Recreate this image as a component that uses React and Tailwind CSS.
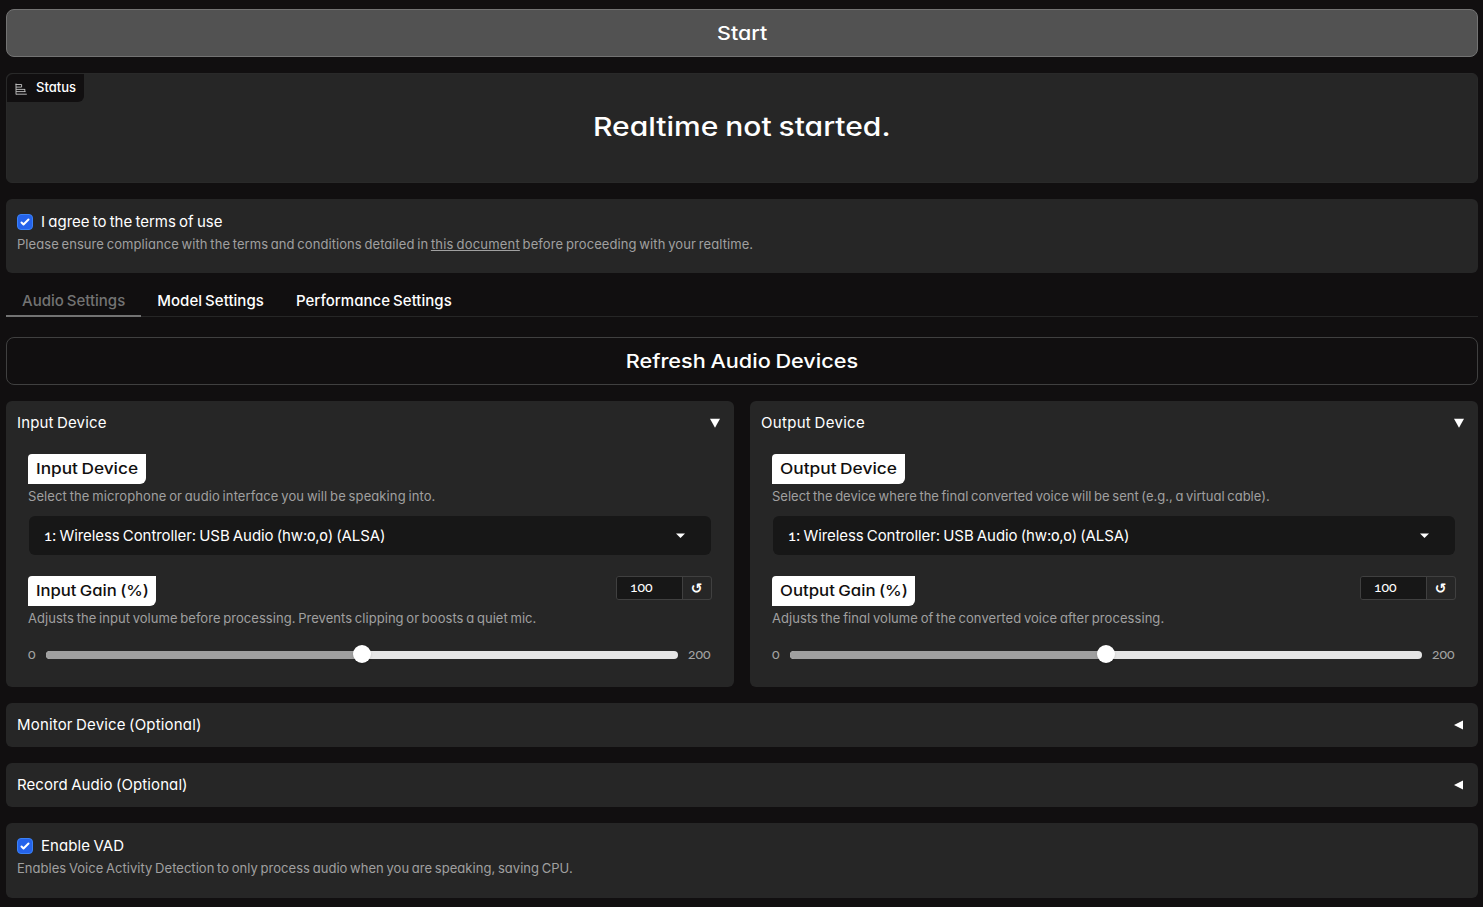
import React, { useState } from 'react';
import clsx from 'clsx';

const devices = [
  {
    title: 'Input Device',
    headerClass: 'tracking-[0.15px]',
    info: 'Select the microphone or audio interface you will be speaking into.',
    infoClass: 'tracking-[0.1px]',
    titleClass: 'scale-x-[1.15]',
    labelWidth: 'w-[118px]',
    value: '1: Wireless Controller: USB Audio (hw:0,0) (ALSA)',
    gainTitle: 'Input Gain (%)',
    gainTitleClass: 'scale-x-[1.11]',
    gainLabelWidth: 'w-[128px]',
    gainInfo: 'Adjusts the input volume before processing. Prevents clipping or boosts a quiet mic.',
    gainInfoClass: 'tracking-[0.045px]',
  },
  {
    title: 'Output Device',
    headerClass: 'tracking-[0.3px]',
    info: 'Select the device where the final converted voice will be sent (e.g., a virtual cable).',
    infoClass: 'tracking-[0px]',
    titleClass: 'scale-x-[1.155]',
    labelWidth: 'w-[133px]',
    value: '1: Wireless Controller: USB Audio (hw:0,0) (ALSA)',
    gainTitle: 'Output Gain (%)',
    gainTitleClass: 'scale-x-[1.12]',
    gainLabelWidth: 'w-[143px]',
    gainInfo: 'Adjusts the final volume of the converted voice after processing.',
    gainInfoClass: 'tracking-[0.06px]',
  },
];

const tabs = [
  { name: 'Audio Settings', className: '' },
  { name: 'Model Settings', className: 'tracking-[0.04px]' },
  { name: 'Performance Settings', className: 'tracking-[0.03px]' },
];

const Checkbox = ({ label, labelClass }) => {
  const [checked, setChecked] = useState(true);

  return (
    <button onClick={() => setChecked(!checked)} className="flex items-center gap-2 h-6 text-[15px]">
      <span
        className={clsx(
          'w-4 h-4 rounded border flex items-center justify-center',
          checked ? 'bg-[#2563eb] border-[#3b82f6]' : 'bg-[#171717] border-[#404040]'
        )}
      >
        {checked && (
          <svg viewBox="0 0 16 16" className="w-4 h-4 shrink-0" fill="white">
            <path d="M12.207 4.793a1 1 0 010 1.414l-5 5a1 1 0 01-1.414 0l-2-2a1 1 0 011.414-1.414L6.5 9.086l4.293-4.293a1 1 0 011.414 0z" />
          </svg>
        )}
      </span>
      <span className={clsx('pt-px [word-spacing:-1px]', labelClass)}>{label}</span>
    </button>
  );
};

const Label = ({ children, width, textClass }) => (
  <div
    className={clsx(
      'h-[30px] shrink-0 flex items-center bg-white rounded-tl rounded-br-md px-2 text-[15px] font-medium text-[#110f0f] whitespace-nowrap',
      width
    )}
  >
    <span className={clsx('origin-left', textClass)}>{children}</span>
  </div>
);

// Digits are set in old-style figures, the rest in the body font
const OldStyle = ({ text }) =>
  text.split(/(\d)/).map((part, i) =>
    /^\d$/.test(part) ? (
      <span key={i} className="font-['Lato'] font-medium oldstyle-nums">{part}</span>
    ) : (
      part
    )
  );

const DevicePanel = ({ device }) => {
  const [gain] = useState(100);

  return (
    <div className="h-[286px] rounded-md bg-[#262626] px-[11px] pt-[11px]">
      <div className="flex items-center justify-between h-[22px] pr-[3px] text-[15px]">
        <span className={clsx('pt-px', device.headerClass)}>{device.title}</span>
        <svg viewBox="0 0 10 10" className="w-[10px] h-[10px]" fill="white">
          <path d="M0 0.8h10L5 9.8z" />
        </svg>
      </div>

      <div className="px-[11px] pt-5">
        <Label width={device.labelWidth} textClass={device.titleClass}>{device.title}</Label>
        <p className={clsx('h-[26px] leading-[25px] text-[13px] text-[#a0a0a0]', device.infoClass)}>{device.info}</p>
        <div className="mx-px mt-[6px] h-[39px] rounded-md bg-[#171717] flex items-center justify-between pl-[15px] pr-[26px]">
          <span className="pt-px text-[15px] tracking-[-0.07px]">
            <OldStyle text={device.value} />
          </span>
          <svg viewBox="0 0 9 5" className="w-[9px] h-[5px]" fill="white">
            <path d="M0 0.4h9L4.5 5z" />
          </svg>
        </div>

        <div className="mt-[21px] flex justify-between items-start">
          <Label width={device.gainLabelWidth} textClass={device.gainTitleClass}>{device.gainTitle}</Label>
          <div className="w-24 h-6 flex rounded-[3px] border border-[#404040] overflow-hidden">
            <div className="flex-1 bg-[#171717] pl-[13px] leading-[20px] font-['Lato'] oldstyle-nums text-sm">{gain}</div>
            <button className="w-[29px] pr-px border-l border-[#404040] font-['DejaVu_Sans'] font-bold text-sm leading-[18px]">↺</button>
          </div>
        </div>
        <p className={clsx('h-[26px] leading-[25px] text-[13px] text-[#a0a0a0]', device.gainInfoClass)}>{device.gainInfo}</p>

        <div className="mt-[13px] flex items-center h-5 font-['Lato'] oldstyle-nums text-sm text-[#a3a3a3]">
          <span className="w-[18px] -mt-0.5">0</span>
          <div className="relative flex-1 h-2 rounded-full bg-[#e5e5e5]">
            <div className="h-2 rounded-l-full bg-[#9f9f9f]" style={{ width: `${gain / 2}%` }} />
            <div
              className="absolute -top-[6px] w-[18px] h-[18px] -ml-[9px] rounded-full bg-white shadow"
              style={{ left: `${gain / 2}%` }}
            />
          </div>
          <span className="w-[34px] -mt-0.5 pl-[10px]">200</span>
        </div>
      </div>
    </div>
  );
};

const Accordion = ({ title, titleClass }) => (
  <div className="mt-4 h-11 rounded-md bg-[#262626] pl-[11px] pr-[15px] flex items-center justify-between text-[15px]">
    <span className={clsx('pt-px', titleClass)}>{title}</span>
    <svg viewBox="0 0 10 10" className="w-[9px] h-[10px]" fill="white">
      <path d="M10 0v10L0 5z" />
    </svg>
  </div>
);

export default function App() {
  const [activeTab, setActiveTab] = useState(0);

  return (
    <div className="min-h-[907px] bg-[#110f10] text-white pt-[9px] pl-[6px] pr-[5px] pb-[9px] font-['Inter',sans-serif] [font-feature-settings:'cv11'] [word-spacing:-1px]">
      <button className="block w-full h-12 rounded-lg border border-[#737373] bg-[#525252] text-[19px] font-[550]">
        <span className="inline-block pt-0.5 scale-x-[1.13]">Start</span>
      </button>

      {/* Status */}
      <div className="relative mt-4 h-[110px] rounded-md border border-[#292929] bg-[#262626] text-center">
        <div className="absolute left-0 top-0 h-7 w-[77px] rounded-tl-md rounded-br-md bg-[#110f10] pl-2 flex items-center gap-[9px] text-[13px] font-medium">
          <svg viewBox="0 0 12 12" className="w-3 h-3 mt-px" fill="none" stroke="#c4c4c4" strokeWidth="0.9">
            <path d="M1 0.5v11M0.6 1.5h6v2.6H1M1 6.4h9M1 8.6h9.6M9.8 6v2.8M1 11.2h10.8" />
          </svg>
          <span>Status</span>
        </div>
        <h2 className="inline-block pt-[33px] leading-10 text-[26px] font-[550] scale-x-[1.155]">Realtime not started.</h2>
      </div>

      {/* Terms */}
      <div className="mt-4 h-[74px] rounded-md bg-[#262626] px-[11px] pt-[11px]">
        <Checkbox label="I agree to the terms of use" />
        <p className="leading-5 text-[13px] text-[#a0a0a0] tracking-[0.065px]">
          Please ensure compliance with the terms and conditions detailed in{' '}
          <a href="#" className="underline tracking-[0.2px]">this document</a>
          <span className="tracking-[0.09px]"> before proceeding with your realtime.</span>
        </p>
      </div>

      {/* Tabs */}
      <div className="mt-3 h-8 flex border-b border-[#262626] text-[15px] font-medium">
        {tabs.map((tab, i) => (
          <button
            key={tab.name}
            onClick={() => setActiveTab(i)}
            className={clsx(
              'h-8 px-4 pt-0.5 border-b-2 [word-spacing:-1px]',
              i === activeTab ? 'text-[#737373] border-[#737373]' : 'text-white border-transparent',
              tab.className
            )}
          >
            {tab.name}
          </button>
        ))}
      </div>

      <button className="mt-5 block w-full h-12 rounded-lg border border-[#404040] text-[19px] font-[550] [word-spacing:-1px]">
        <span className="inline-block pt-0.5 scale-x-[1.14]">Refresh Audio Devices</span>
      </button>

      <div className="mt-4 grid grid-cols-2 gap-4">
        {devices.map((device) => (
          <DevicePanel key={device.title} device={device} />
        ))}
      </div>

      <Accordion title="Monitor Device (Optional)" titleClass="tracking-[0.17px]" />
      <Accordion title="Record Audio (Optional)" titleClass="tracking-[0.09px]" />

      {/* Voice activity detection */}
      <div className="mt-4 h-[75px] rounded-md bg-[#262626] px-[11px] pt-[11px]">
        <Checkbox label="Enable VAD" labelClass="tracking-[0.08px]" />
        <p className="leading-5 text-[13px] text-[#a0a0a0] tracking-[0.035px]">
          Enables Voice Activity Detection to only process audio when you are speaking, saving CPU.
        </p>
      </div>
    </div>
  );
}
